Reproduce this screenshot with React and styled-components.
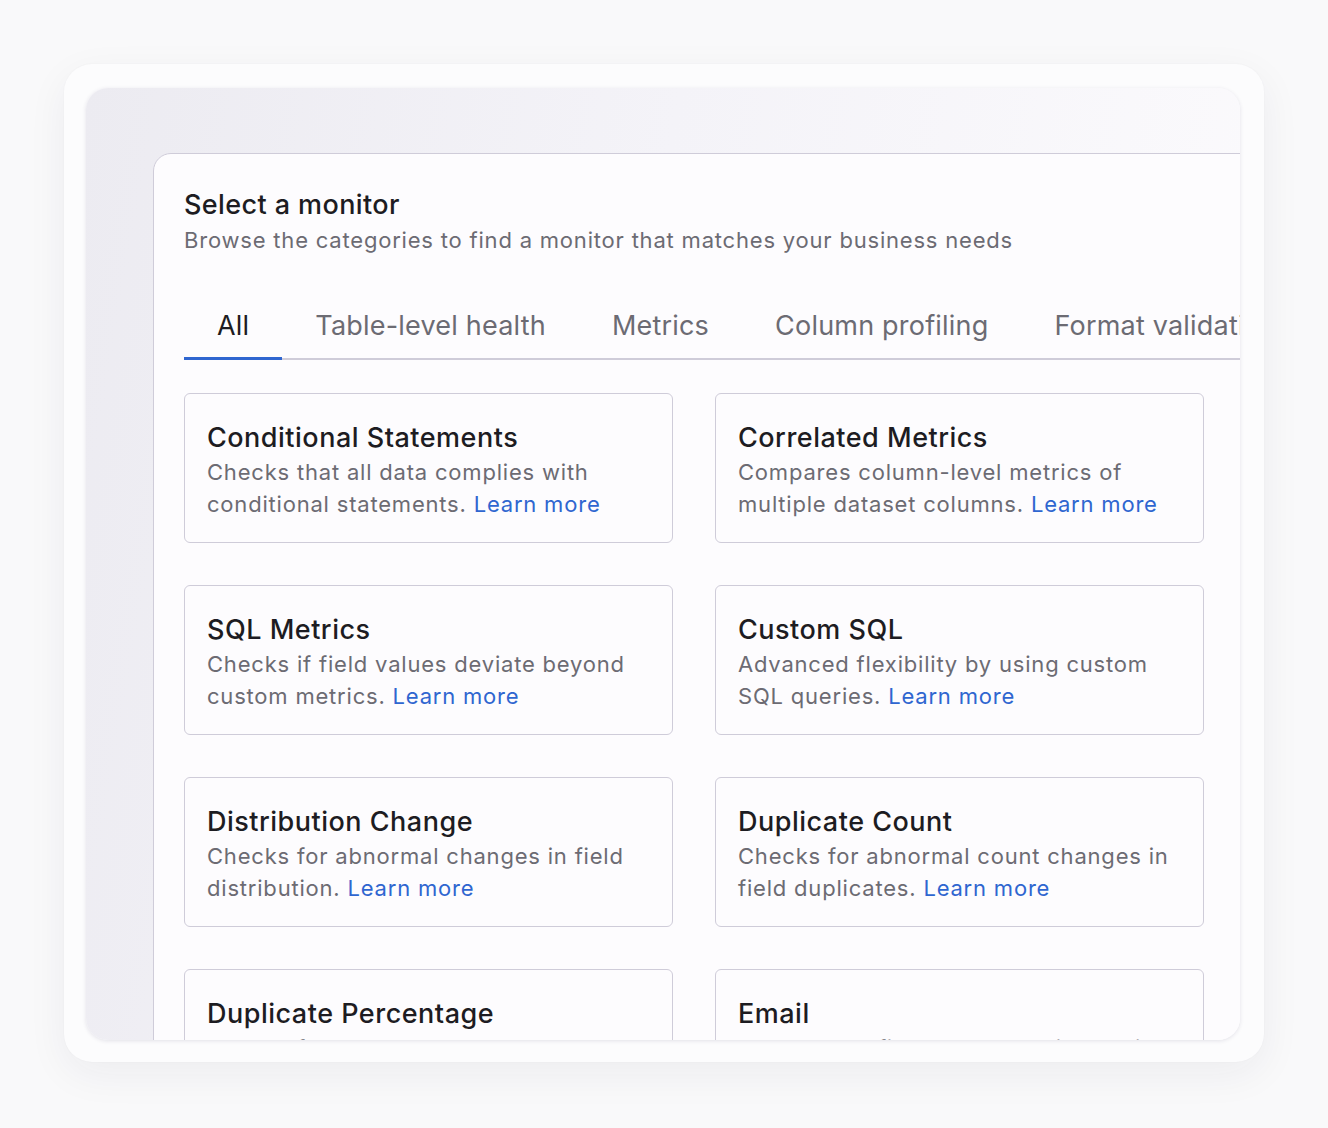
import React from 'react'
import styled, { createGlobalStyle } from 'styled-components'

const GlobalStyle = createGlobalStyle`
    body {
        margin: 0;
        background: #f9f9fa;
        font-family: Inter, "Noto Sans", sans-serif;
    }
`

const tabs = ['All', 'Table-level health', 'Metrics', 'Column profiling', 'Format validation']

const monitors = [
    { title: 'Conditional Statements', text: 'Checks that all data complies with conditional statements.' },
    { title: 'Correlated Metrics', text: 'Compares column-level metrics of multiple dataset columns.' },
    { title: 'SQL Metrics', text: 'Checks if field values deviate beyond custom metrics.' },
    { title: 'Custom SQL', text: 'Advanced flexibility by using custom SQL queries.' },
    { title: 'Distribution Change', text: 'Checks for abnormal changes in field distribution.' },
    { title: 'Duplicate Count', text: 'Checks for abnormal count changes in field duplicates.' },
    { title: 'Duplicate Percentage', text: 'Checks for abnormal percentage changes in field duplicates.' },
    { title: 'Email', text: 'Checks that field values are in a valid email format.' },
]

function App() {
    return (
        <Page>
            <GlobalStyle />
            <Outer>
                <Frame>
                    <Panel>
                        <Title>Select a monitor</Title>
                        <Subtitle>Browse the categories to find a monitor that matches your business needs</Subtitle>
                        <Tabs>
                            {tabs.map((t, i) => (
                                <Tab key={t} active={i === 0}>{t}</Tab>
                            ))}
                        </Tabs>
                        <Grid>
                            {monitors.map(m => (
                                <Card key={m.title}>
                                    <CardTitle>{m.title}</CardTitle>
                                    <CardText>
                                        {m.text} <a href="#">Learn more</a>
                                    </CardText>
                                </Card>
                            ))}
                        </Grid>
                    </Panel>
                </Frame>
            </Outer>
        </Page>
    )
}

export default App

const Page = styled.div`
    width: 1328px;
    height: 1128px;
    padding: 64px;
    box-sizing: border-box;
`
const Outer = styled.div`
    width: 1200px;
    height: 998px;
    box-sizing: border-box;
    padding: 24px 24px 22px 22px;
    background: #fcfcfd;
    border-radius: 28px;
    box-shadow: 0 12px 40px rgba(30, 30, 60, 0.06), 0 0 2px rgba(30, 30, 60, 0.04);
`
const Frame = styled.div`
    height: 100%;
    border-radius: 22px;
    overflow: hidden;
    padding: 65px 0 0 67px;
    box-sizing: border-box;
    background: linear-gradient(100deg, #ecebf1 0%, #f4f3f8 45%, #fcfbfd 100%);
    box-shadow: 0 1px 4px rgba(40, 30, 80, 0.12);
`
const Panel = styled.div`
    width: 1120px;
    height: 1000px;
    box-sizing: border-box;
    padding: 34px 0 0 30px;
    background: #fdfcfe;
    border: 1.5px solid #cfccd9;
    border-radius: 18px 0 0 0;
`
const Title = styled.div`
    font-size: 27px;
    line-height: 34px;
    letter-spacing: 0.4px;
    color: #1d1c22;
    font-weight: 500;
`
const Subtitle = styled.div`
    margin-top: 2px;
    font-size: 22px;
    line-height: 32px;
    letter-spacing: 0.8px;
    color: #6c6b73;
`
const Tabs = styled.div`
    display: flex;
    margin-top: 53px;
    border-bottom: 2px solid #cfccd9;
    white-space: nowrap;
`
const Tab = styled.div`
    padding: 0 33px 14px;
    font-size: 27px;
    line-height: 34px;
    letter-spacing: 0.2px;
    color: ${p => (p.active ? '#1d1c22' : '#6c6b73')};
    margin-bottom: -2px;
    border-bottom: 3px solid ${p => (p.active ? '#2f66d0' : 'transparent')};
`
const Grid = styled.div`
    display: grid;
    grid-template-columns: 489px 489px;
    column-gap: 42px;
    row-gap: 42px;
    margin-top: 33px;
`
const Card = styled.div`
    height: 150px;
    box-sizing: border-box;
    padding: 28px 22px 0;
    border: 1.5px solid #cfccd9;
    border-radius: 6px;
    background: #fdfcfe;
`
const CardTitle = styled.div`
    font-size: 27px;
    line-height: 32px;
    letter-spacing: 0.5px;
    color: #1d1c22;
    font-weight: 500;
`
const CardText = styled.div`
    margin-top: 2px;
    font-size: 22px;
    line-height: 32px;
    letter-spacing: 0.8px;
    color: #6c6b73;

    a {
        color: #2f66d0;
        text-decoration: none;
    }
`
